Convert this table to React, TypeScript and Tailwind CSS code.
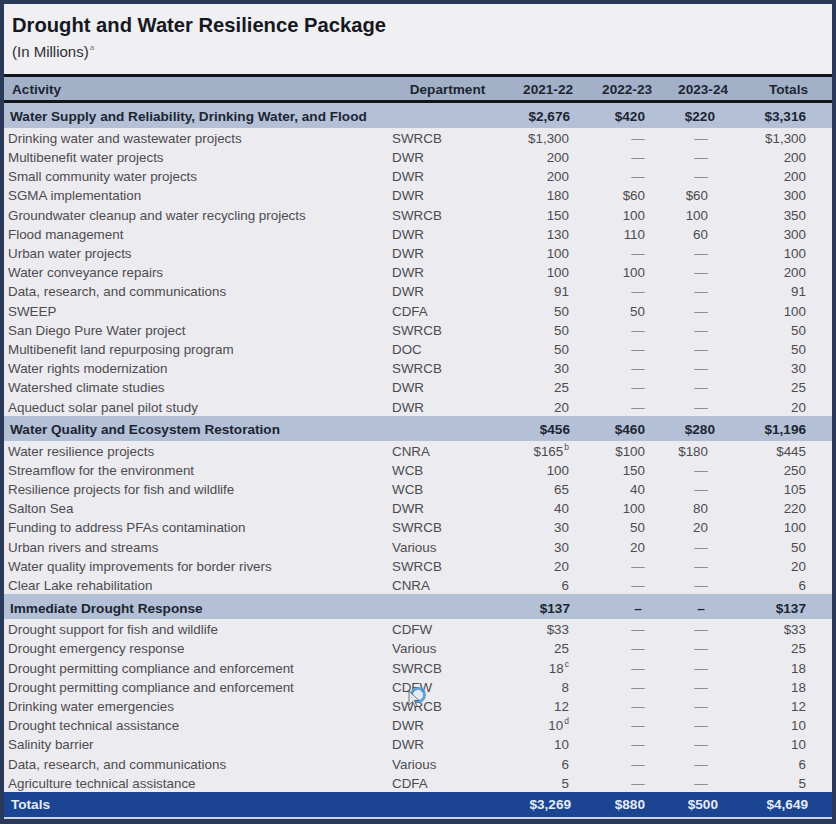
import React from "react";

type Val = string | null;
type DataRow = { a: string; d: string; v: [Val, Val, Val, Val]; sup?: string };
type Section = { title: string; totals: [Val, Val, Val, Val]; rows: DataRow[] };

const sections: Section[] = [
  {
    title: "Water Supply and Reliability, Drinking Water, and Flood",
    totals: ["$2,676", "$420", "$220", "$3,316"],
    rows: [
      { a: "Drinking water and wastewater projects", d: "SWRCB", v: ["$1,300", null, null, "$1,300"] },
      { a: "Multibenefit water projects", d: "DWR", v: ["200", null, null, "200"] },
      { a: "Small community water projects", d: "DWR", v: ["200", null, null, "200"] },
      { a: "SGMA implementation", d: "DWR", v: ["180", "$60", "$60", "300"] },
      { a: "Groundwater cleanup and water recycling projects", d: "SWRCB", v: ["150", "100", "100", "350"] },
      { a: "Flood management", d: "DWR", v: ["130", "110", "60", "300"] },
      { a: "Urban water projects", d: "DWR", v: ["100", null, null, "100"] },
      { a: "Water conveyance repairs", d: "DWR", v: ["100", "100", null, "200"] },
      { a: "Data, research, and communications", d: "DWR", v: ["91", null, null, "91"] },
      { a: "SWEEP", d: "CDFA", v: ["50", "50", null, "100"] },
      { a: "San Diego Pure Water project", d: "SWRCB", v: ["50", null, null, "50"] },
      { a: "Multibenefit land repurposing program", d: "DOC", v: ["50", null, null, "50"] },
      { a: "Water rights modernization", d: "SWRCB", v: ["30", null, null, "30"] },
      { a: "Watershed climate studies", d: "DWR", v: ["25", null, null, "25"] },
      { a: "Aqueduct solar panel pilot study", d: "DWR", v: ["20", null, null, "20"] },
    ],
  },
  {
    title: "Water Quality and Ecosystem Restoration",
    totals: ["$456", "$460", "$280", "$1,196"],
    rows: [
      { a: "Water resilience projects", d: "CNRA", v: ["$165", "$100", "$180", "$445"], sup: "b" },
      { a: "Streamflow for the environment", d: "WCB", v: ["100", "150", null, "250"] },
      { a: "Resilience projects for fish and wildlife", d: "WCB", v: ["65", "40", null, "105"] },
      { a: "Salton Sea", d: "DWR", v: ["40", "100", "80", "220"] },
      { a: "Funding to address PFAs contamination", d: "SWRCB", v: ["30", "50", "20", "100"] },
      { a: "Urban rivers and streams", d: "Various", v: ["30", "20", null, "50"] },
      { a: "Water quality improvements for border rivers", d: "SWRCB", v: ["20", null, null, "20"] },
      { a: "Clear Lake rehabilitation", d: "CNRA", v: ["6", null, null, "6"] },
    ],
  },
  {
    title: "Immediate Drought Response",
    totals: ["$137", null, null, "$137"],
    rows: [
      { a: "Drought support for fish and wildlife", d: "CDFW", v: ["$33", null, null, "$33"] },
      { a: "Drought emergency response", d: "Various", v: ["25", null, null, "25"] },
      { a: "Drought permitting compliance and enforcement", d: "SWRCB", v: ["18", null, null, "18"], sup: "c" },
      { a: "Drought permitting compliance and enforcement", d: "CDFW", v: ["8", null, null, "18"] },
      { a: "Drinking water emergencies", d: "SWRCB", v: ["12", null, null, "12"] },
      { a: "Drought technical assistance", d: "DWR", v: ["10", null, null, "10"], sup: "d" },
      { a: "Salinity barrier", d: "DWR", v: ["10", null, null, "10"] },
      { a: "Data, research, and communications", d: "Various", v: ["6", null, null, "6"] },
      { a: "Agriculture technical assistance", d: "CDFA", v: ["5", null, null, "5"] },
    ],
  },
];

const GRID = "grid grid-cols-[386px_115px_70px_80px_77px_80px]";

function Dash({ bold }: { bold?: boolean }) {
  return (
    <span className={`inline-block w-[14px] text-center ${bold ? "text-[#1d2533] font-bold" : "text-[#8d8d92]"}`}>
      {bold ? "–" : "—"}
    </span>
  );
}

function DataLine({ r }: { r: DataRow }) {
  const [c1, c2, c3, c4] = r.v;
  return (
    <div className={`${GRID} h-[19.2px] pt-[2px] items-center text-[13.4px] leading-none text-[#4c4c50]`}>
      <div className="pl-[4px] whitespace-nowrap">{r.a}</div>
      <div className="pl-[2px]">{r.d}</div>
      <div className="text-right pr-[6px]">
        {c1}
        {r.sup ? <span className="inline-block align-top text-[8.5px] leading-none -mt-[2px] ml-[1px]">{r.sup}</span> : null}
      </div>
      <div className="text-right pr-[10px]">{c2 ? c2 : <Dash />}</div>
      <div className="text-right pr-[24px]">{c3 ? c3 : <Dash />}</div>
      <div className="text-right pr-[6px]">{c4}</div>
    </div>
  );
}

function SectionLine({ s }: { s: Section }) {
  const [c1, c2, c3, c4] = s.totals;
  return (
    <div className={`${GRID} h-[25px] pt-[3px] items-center bg-[#b3c0d5] text-[13.6px] leading-none font-bold text-[#1d2533]`}>
      <div className="pl-[6px] whitespace-nowrap">{s.title}</div>
      <div />
      <div className="text-right pr-[5px]">{c1}</div>
      <div className="text-right pr-[10px]">{c2 ? <span className="pr-[-2px]">{c2}</span> : <Dash bold />}</div>
      <div className="text-right pr-[24px]">{c3 ? <span className="-mr-[7px]">{c3}</span> : <Dash bold />}</div>
      <div className="text-right pr-[6px]">{c4}</div>
    </div>
  );
}

export default function App() {
  return (
    <div className="relative w-[836px] h-[824px] bg-[#2a3957] p-[4px] font-['Liberation_Sans',Arial,sans-serif]">
      <div className="flex flex-col bg-[#ecebef]">
        <div className="h-[70px] bg-[#f0eff2] pl-[8px] pt-[9px]">
          <div className="text-[20.2px] leading-[24px] font-bold text-[#15181f]">
            Drought and Water Resilience Package
          </div>
          <div className="mt-[6px] text-[15px] leading-[18px] text-[#2d2f35]">
            (In Millions)
            <span className="inline-block align-top text-[8px] leading-none mt-[1px] ml-[1px] text-[#7a7c84]">a</span>
          </div>
        </div>
        <div className="h-[3px] bg-[#111418]" />
        <div className={`${GRID} h-[23px] pt-[2px] items-center bg-[#a3b1c8] text-[13.6px] leading-none font-bold text-[#1d2533]`}>
          <div className="pl-[8px]">Activity</div>
          <div className="text-center">Department</div>
          <div className="text-right pr-[2px]">2021-22</div>
          <div className="text-right pr-[3px]">2022-23</div>
          <div className="text-right pr-[4px]">2023-24</div>
          <div className="text-right pr-[4px]">Totals</div>
        </div>
        <div className="h-[3px] bg-[#111418]" />
        {sections.map((s) => (
          <React.Fragment key={s.title}>
            <SectionLine s={s} />
            {s.rows.map((r, i) => (
              <DataLine key={i} r={r} />
            ))}
          </React.Fragment>
        ))}
        <div className={`${GRID} h-[25px] items-center bg-[#1b4592] text-[13.6px] leading-none font-bold text-[#e6ecf7]`}>
          <div className="pl-[7px]">Totals</div>
          <div />
          <div className="text-right pr-[4px]">$3,269</div>
          <div className="text-right pr-[10px]">$880</div>
          <div className="text-right pr-[14px]">$500</div>
          <div className="text-right pr-[4px]">$4,649</div>
        </div>
        <div className="h-[2px] bg-[#c9d4e6]" />
      </div>
      <svg className="absolute left-[404px] top-[684px]" width="26" height="26" viewBox="0 0 26 26">
        <circle cx="14" cy="11" r="6.5" fill="none" stroke="#4a98d8" strokeWidth="3" opacity="0.85" />
        <circle cx="14" cy="11" r="3" fill="#dcecf8" />
        <path d="M5 7 L5 21 L8.5 17.5 L11 23 L13 22 L10.5 16.5 L15 16.5 Z" fill="#f4f4f4" stroke="#333" strokeWidth="0.8" opacity="0.8" />
      </svg>
    </div>
  );
}
